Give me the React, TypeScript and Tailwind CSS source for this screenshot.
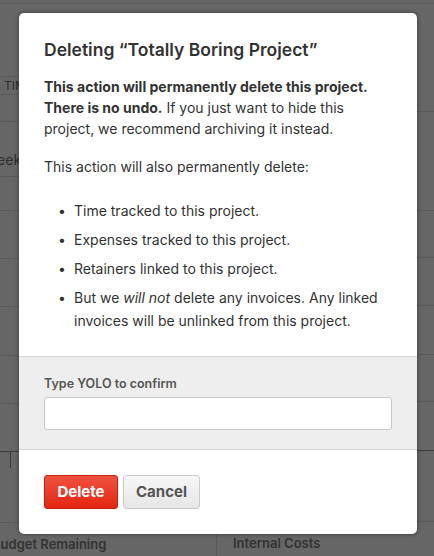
import React from 'react';

const font = { fontFamily: 'Inter, "Noto Sans", sans-serif' };

function Backdrop() {
  // the dimmed page behind the dialog
  return (
    <div className="absolute inset-0 flex flex-col">
      <div className="h-[4px] border-b border-[#595959]" />
      <div className="flex flex-1">
        <div className="w-[217px] flex flex-col">
          <div className="h-[72px]" />
          <div className="h-[19px] border-y border-[#595959] flex items-center pl-[4px] text-[12px] text-[#2e2e2e]">TIME</div>
          <div className="h-[27px] border-b border-[#595959]" />
          <div className="h-[55px] border-b border-[#595959] flex items-end pb-[6px] -ml-[16px] text-[14px] text-[#2e2e2e]">Week</div>
          <div className="h-[34px] border-b border-[#595959]" />
          <div className="h-[48px] border-b border-[#595959]" />
          <div className="h-[48px] border-b border-[#595959]" />
          <div className="h-[49px] border-b border-[#595959]" />
          <div className="h-[48px] border-b border-[#595959]" />
          <div className="h-[48px] border-b border-[#3c3c3c] relative">
            <div className="absolute left-[10px] -bottom-[17px] h-[16px] border-l border-[#3c3c3c]" />
          </div>
          <div className="h-[71px] border-b border-[#595959]" />
          <div className="flex-1 border-r border-[#595959] -ml-[8px] pt-[12px] text-[13px] font-semibold text-[#333]">Budget Remaining</div>
        </div>
        <div className="flex-1 flex flex-col">
          <div className="h-[108px] border-b border-[#595959]" />
          <div className="h-[99px] border-b border-[#595959]" />
          <div className="h-[47px] border-b border-[#595959]" />
          <div className="h-[48px] border-b border-[#595959]" />
          <div className="h-[49px] border-b border-[#595959]" />
          <div className="h-[47px] border-b border-[#595959]" />
          <div className="h-[49px] border-b border-[#3c3c3c]" />
          <div className="h-[71px] border-b border-[#595959]" />
          <div className="flex-1 pl-[16px] pt-[12px] text-[13px] font-semibold text-[#333]">Internal Costs</div>
        </div>
      </div>
    </div>
  );
}

export default function App() {
  return (
    <div className="relative h-[556px] w-[434px] overflow-hidden bg-[#666666]" style={font}>
      <Backdrop />
      <div className="absolute left-[19px] top-[13px] w-[398px] h-[521px] rounded-[5px] bg-white shadow-[0_0_4px_rgba(0,0,0,0.45)] flex flex-col overflow-hidden text-[#333]">
        <div className="px-[25px] pt-[25px] pb-[24px] flex-1">
          <h2 className="text-[17.5px] font-semibold leading-[24px] text-[#333]">Deleting “Totally Boring Project”</h2>
          <p className="mt-[14px] text-[14px] leading-[21px]">
            <strong className="font-bold">This action will permanently delete this project. There is no undo.</strong>{' '}
            If you just want to hide this project, we recommend archiving it instead.
          </p>
          <p className="mt-[17px] text-[14px] leading-[21px]">This action will also permanently delete:</p>
          <ul className="mt-[22px] flex flex-col gap-[6px] text-[14px] leading-[23px]">
            <li className="flex"><span className="w-[30px] pl-[14px]">•</span><span>Time tracked to this project.</span></li>
            <li className="flex"><span className="w-[30px] pl-[14px]">•</span><span>Expenses tracked to this project.</span></li>
            <li className="flex"><span className="w-[30px] pl-[14px]">•</span><span>Retainers linked to this project.</span></li>
            <li className="flex">
              <span className="w-[30px] pl-[14px] shrink-0">•</span>
              <span>But we <em>will not</em> delete any invoices. Any linked invoices will be unlinked from this project.</span>
            </li>
          </ul>
        </div>
        <div className="h-[94px] border-y border-[#d4d4d4] bg-[#eeeeee] px-[25px] pt-[18px]">
          <label className="block text-[12.5px] font-semibold leading-[18px] text-[#555]">Type YOLO to confirm</label>
          <input className="mt-[4px] block h-[33px] w-[348px] rounded-[3px] border border-[#c8c8c8] bg-white px-2 text-[14px] outline-none" />
        </div>
        <div className="h-[84px] px-[25px] pt-[25px] flex gap-[5px]">
          <button className="h-[34px] w-[74px] rounded-[3px] border border-[#c9200c] bg-gradient-to-b from-[#f0503f] to-[#e4230b] text-[15px] font-bold text-white">Delete</button>
          <button className="h-[34px] w-[77px] rounded-[3px] border border-[#cccccc] bg-gradient-to-b from-[#f7f7f7] to-[#e6e6e6] text-[15px] font-bold text-[#555]">Cancel</button>
        </div>
      </div>
    </div>
  );
}
